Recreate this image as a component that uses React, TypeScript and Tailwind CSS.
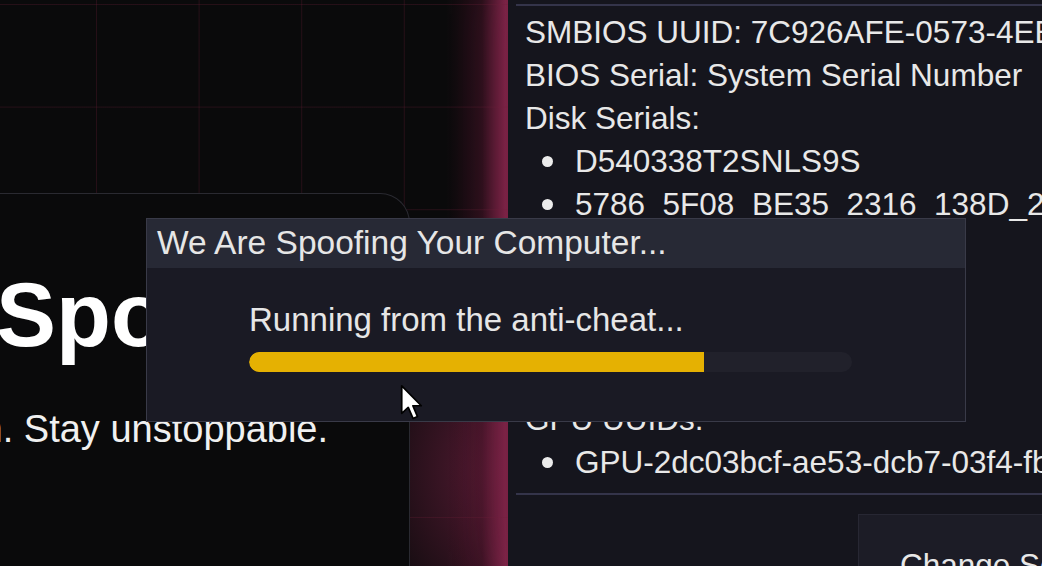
import React from "react";

const Bullet: React.FC<{ text: string }> = ({ text }) => (
  <div className="flex items-center h-[43px]">
    <span className="ml-[17px] w-[11px] h-[11px] rounded-full bg-[#ececec] shrink-0" />
    <span className="ml-[22px]">{text}</span>
  </div>
);

const Line: React.FC<{ text: string }> = ({ text }) => (
  <div className="h-[43px] leading-[43px]">{text}</div>
);

const App: React.FC = () => {
  return (
    <div className="relative w-[1042px] h-[566px] overflow-hidden flex bg-[#0a0a0b] font-['Liberation_Sans',Arial,sans-serif] text-[#e8e8e8]">
      {/* left: landing page behind */}
      <div className="w-[508px] h-full shrink-0 bg-[image:linear-gradient(to_right,transparent_446px,rgba(70,20,40,0.5)_482px,rgba(125,37,72,1)_506px),radial-gradient(ellipse_150px_190px_at_505px_470px,rgba(110,32,64,0.8),transparent)]">
        <div className="h-full pt-[193px] bg-[image:linear-gradient(to_right,rgba(110,30,55,0.28)_1px,transparent_1px),linear-gradient(to_bottom,rgba(110,30,55,0.28)_1px,transparent_1px)] bg-[size:102.6px_102.6px] bg-[position:96px_4px]">
          <div className="ml-[-200px] w-[610px] h-[400px] border-t border-r border-[#2a2a31] rounded-tr-[30px] bg-[#0a0a0b] pl-[11px] pt-[76px]">
            <h1 className="text-[90px] leading-none font-bold text-white whitespace-nowrap">The Spoofer</h1>
            <p className="mt-[50px] ml-[-9px] text-[38px] leading-none text-[#f0f0f0] whitespace-nowrap">
              Stay hidden. Stay unstoppable.
            </p>
          </div>
        </div>
      </div>

      {/* right: hardware info panel */}
      <div className="flex-1 h-full bg-[#15151d] pl-[8px] flex flex-col overflow-hidden shadow-[-10px_0_40px_rgba(120,30,65,0.35)]">
        <div className="mt-[4px] border-y-2 border-[#34344a] pl-[9px] pt-[5px] pb-[9px] text-[31.5px] whitespace-nowrap">
          <Line text="SMBIOS UUID: 7C926AFE-0573-4EEB-9B21-2CF05D1A7E43" />
          <Line text="BIOS Serial: System Serial Number" />
          <Line text="Disk Serials:" />
          <Bullet text="D540338T2SNLS9S" />
          <Bullet text="5786_5F08_BE35_2316_138D_2B00_0000_0001." />
          <Line text="MAC Addresses:" />
          <Bullet text="00:E0:4C:68:1A:2F" />
          <Line text="CPU ID: BFEBFBFF000906EA" />
          <Line text="Baseboard: Default string" />
          <Line text="GPU UUIDs:" />
          <Bullet text="GPU-2dc03bcf-ae53-dcb7-03f4-fb6c1e2a9d07" />
        </div>
        <button className="mt-[19px] ml-[342px] w-[260px] shrink-0 h-[80px] bg-[#1c1c26] border border-[#272733] text-left pl-[41px] pt-[22px] text-[31.5px] leading-[43px] whitespace-nowrap self-start">
          Change Serials
        </button>
      </div>

      {/* spoofing dialog */}
      <div className="absolute left-[146px] top-[218px] w-[820px] h-[204px] border border-[#393a48] bg-[#1a1a24] flex flex-col">
        <div className="h-[49px] bg-[#272935] flex items-center pl-[10px] text-[33.5px] text-[#e6e6e6] whitespace-nowrap">
          We Are Spoofing Your Computer...
        </div>
        <div className="pl-[102px] pt-[35px]">
          <div className="text-[33px] leading-none text-[#e6e6e6] whitespace-nowrap">Running from the anti-cheat...</div>
          <div className="mt-[16px] w-[603px] h-[20px] rounded-full bg-[#21212b] overflow-hidden">
            <div className="w-[455px] h-full rounded-l-full bg-[#e5b102]" />
          </div>
        </div>
      </div>

      {/* mouse pointer */}
      <svg className="absolute left-[400px] top-[384px]" width="24" height="38" viewBox="0 0 14 22">
        <path d="M1 1 L1 17 L4.8 13.6 L7.6 20 L10.2 18.9 L7.5 12.6 L12.4 12.6 Z" fill="#ffffff" stroke="#000000" strokeWidth="1" strokeLinejoin="round" />
      </svg>
    </div>
  );
};

export default App;
